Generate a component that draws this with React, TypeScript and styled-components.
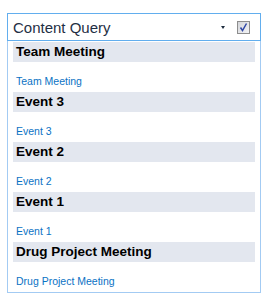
import React from "react";
import styled, { createGlobalStyle } from "styled-components";

const items = [
  "Team Meeting",
  "Event 3",
  "Event 2",
  "Event 1",
  "Drug Project Meeting",
];

const App = () => {
  return (
    <>
      <GlobalStyle />
      <Page>
        <Widget>
          <Header>
            <Title>Content Query</Title>
            <Arrow />
            <CheckBox>
              <svg width="13" height="13" viewBox="0 0 13 13">
                <defs>
                  <linearGradient id="cbg" x1="0" y1="0" x2="1" y2="1">
                    <stop offset="0" stopColor="#d2d4d8" />
                    <stop offset="1" stopColor="#f4f4f6" />
                  </linearGradient>
                </defs>
                <rect x="0.5" y="0.5" width="12" height="12" fill="url(#cbg)" stroke="#8d8d8d" />
                <path d="M3.5 6.5 L5.5 9.5 L9.5 2.5" fill="none" stroke="#2f47a6" strokeWidth="1.5" />
              </svg>
            </CheckBox>
          </Header>
          <Body>
            {items.map((item) => (
              <Group key={item}>
                <GroupTitle>{item}</GroupTitle>
                <ItemLink>{item}</ItemLink>
              </Group>
            ))}
          </Body>
        </Widget>
      </Page>
    </>
  );
};

export default App;

const GlobalStyle = createGlobalStyle`
  body {
    margin: 0;
    background: #ffffff;
    font-family: "Liberation Sans", Arial, sans-serif;
  }
`;

const Page = styled.div`
  padding: 13px 7px;
`;

const Widget = styled.div`
  width: 254px;
`;

const Header = styled.div`
  display: flex;
  align-items: center;
  height: 26px;
  padding: 0 10px 0 5px;
  border: 1px solid #62aeee;
`;

const Title = styled.div`
  flex: 1;
  color: #1f2f44;
  font-size: 15px;
  padding-top: 1px;
`;

const Arrow = styled.div`
  width: 0;
  height: 0;
  margin-right: 12px;
  margin-top: 1px;
  border-left: 2.5px solid transparent;
  border-right: 2.5px solid transparent;
  border-top: 3px solid #1e2d3f;
`;

const CheckBox = styled.div`
  display: flex;
  width: 13px;
  height: 13px;
  margin-top: 1px;
`;

const Body = styled.div`
  padding: 1px 5px 0;
  border: 1px solid #a3cbf3;
  border-top: none;
`;

const Group = styled.div`
  display: flex;
  flex-direction: column;
`;

const GroupTitle = styled.div`
  height: 20px;
  padding-left: 3px;
  background: #e3e7ef;
  color: #000000;
  font-size: 13.5px;
  font-weight: bold;
  line-height: 20px;
`;

const ItemLink = styled.a`
  height: 30px;
  padding: 12px 0 0 3px;
  box-sizing: border-box;
  color: #0a72c4;
  font-size: 10.5px;
  line-height: 14px;
  cursor: pointer;
`;
